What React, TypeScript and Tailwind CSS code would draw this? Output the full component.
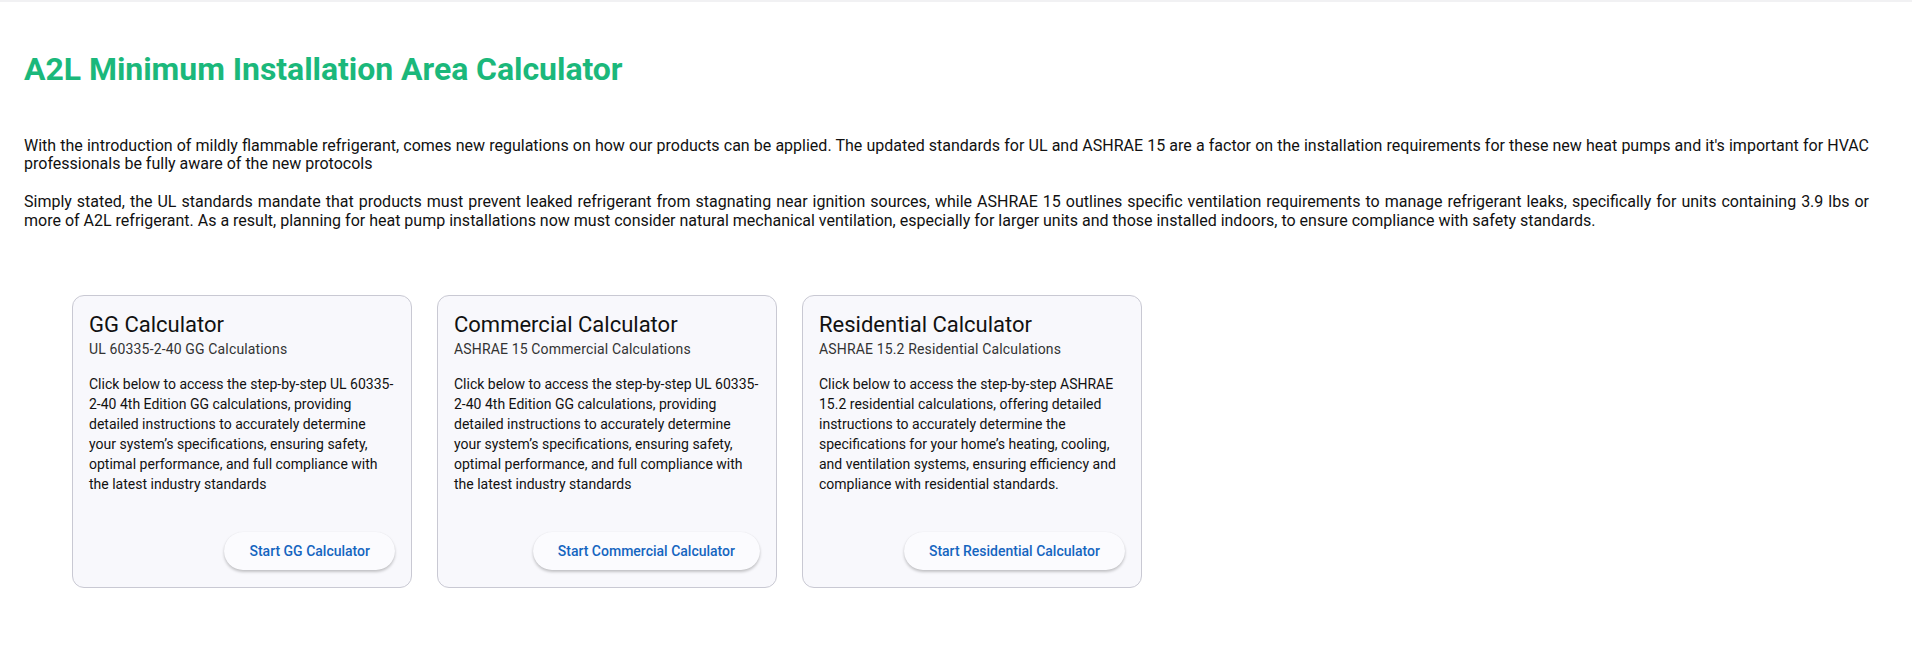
import React from "react";

type Card = {
  title: string;
  subtitle: string;
  body: string;
  button: string;
};

const cards: Card[] = [
  {
    title: "GG Calculator",
    subtitle: "UL 60335-2-40 GG Calculations",
    body:
      "Click below to access the step-by-step UL 60335-2-40 4th Edition GG calculations, providing detailed instructions to accurately determine your system\u2019s specifications, ensuring safety, optimal performance, and full compliance with the latest industry standards",
    button: "Start GG Calculator",
  },
  {
    title: "Commercial Calculator",
    subtitle: "ASHRAE 15 Commercial Calculations",
    body:
      "Click below to access the step-by-step UL 60335-2-40 4th Edition GG calculations, providing detailed instructions to accurately determine your system\u2019s specifications, ensuring safety, optimal performance, and full compliance with the latest industry standards",
    button: "Start Commercial Calculator",
  },
  {
    title: "Residential Calculator",
    subtitle: "ASHRAE 15.2 Residential Calculations",
    body:
      "Click below to access the step-by-step ASHRAE 15.2 residential calculations, offering detailed instructions to accurately determine the specifications for your home\u2019s heating, cooling, and ventilation systems, ensuring efficiency and compliance with residential standards.",
    button: "Start Residential Calculator",
  },
];

export default function App() {
  return (
    <div
      className="min-h-screen bg-white text-black"
      style={{ fontFamily: "Roboto, 'Liberation Sans', sans-serif" }}
    >
      <div className="h-[2px] bg-[#f1f1f3]" />
      <div className="pl-6 pr-[43px] pt-[49px]">
        <h1 className="text-[32px] font-bold leading-[37.5px] tracking-[-0.05px] text-[#1bb87b]">
          A2L Minimum Installation Area Calculator
        </h1>
        <div className="mt-12 text-[16px] leading-[18.75px] text-justify text-[#111]">
          <p>
            With the introduction of mildly flammable refrigerant, comes new regulations on how our products can be applied. The updated standards for UL and ASHRAE 15 are a factor on the installation requirements for these new heat pumps and it's important for HVAC professionals be fully aware of the new protocols
          </p>
          <p className="mt-[18.75px]">
            Simply stated, the UL standards mandate that products must prevent leaked refrigerant from stagnating near ignition sources, while ASHRAE 15 outlines specific ventilation requirements to manage refrigerant leaks, specifically for units containing 3.9 lbs or more of A2L refrigerant. As a result, planning for heat pump installations now must consider natural mechanical ventilation, especially for larger units and those installed indoors, to ensure compliance with safety standards.
          </p>
        </div>
        <div className="mt-[65px] ml-12 flex gap-[25px]">
          {cards.map((c) => (
            <div
              key={c.title}
              className="flex h-[293px] w-[340px] flex-col rounded-[12px] border border-[#c9c9d3] bg-[#f8f8fc] px-4 pt-[17px] pb-[17px]"
            >
              <div className="text-[22px] leading-[24px] text-[#111]">{c.title}</div>
              <div className="mt-[4px] text-[14px] leading-[16px] tracking-[0.15px] text-[#333]">
                {c.subtitle}
              </div>
              <p className="mt-[17px] text-[14px] leading-5 text-[#111]">{c.body}</p>
              <div className="mt-auto flex justify-end">
                <button className="h-[38px] rounded-full bg-[#fbfbfe] px-[25px] text-[14px] font-medium text-[#1565c0] shadow-[0_2px_3px_rgba(0,0,0,0.22),0_0_1px_rgba(0,0,0,0.08)]">
                  {c.button}
                </button>
              </div>
            </div>
          ))}
        </div>
      </div>
    </div>
  );
}
